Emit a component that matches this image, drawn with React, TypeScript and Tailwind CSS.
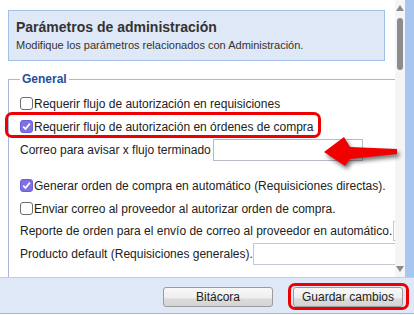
import React from "react";

function Check({ checked }: { checked?: boolean }) {
  if (checked) {
    return (
      <span className="flex h-[13px] w-[13px] shrink-0 items-center justify-center rounded-[3px] border border-[#6b60d6] bg-[#7d71e4]">
        <svg width="9" height="9" viewBox="0 0 9 9">
          <path d="M1.2 4.6 L3.5 7 L7.9 1.6" fill="none" stroke="#ffffff" strokeWidth="1.8" />
        </svg>
      </span>
    );
  }
  return <span className="h-[13px] w-[13px] shrink-0 rounded-[3px] border border-[#6e6e6e] bg-white" />;
}

function CheckRow({ label, checked }: { label: string; checked?: boolean }) {
  return (
    <div className="flex h-[23px] items-center whitespace-nowrap">
      <Check checked={checked} />
      <span className="pl-[1px]">{label}</span>
    </div>
  );
}

function Button({ label }: { label: string }) {
  return (
    <button className="h-[20px] w-[110px] rounded-[3px] border border-[#9c9c9c] bg-[linear-gradient(to_bottom,#f8f8f8_0%,#eeeeee_55%,#dcdcdc_60%,#d4d4d4_100%)] text-[12px] leading-none text-[#222]">
      {label}
    </button>
  );
}

export default function App() {
  return (
    <div className="relative flex h-[315px] w-[414px] flex-col overflow-hidden bg-white font-['Liberation_Sans',Arial,sans-serif] text-[12px] text-[#222]">
      <div className="flex h-[277px]">
        <main className="w-[395px] overflow-hidden pl-[8px] pt-[10px]">
          <div className="w-[377px] border border-[#a3c0e8] bg-[#dfe8f6] pb-[8px] pl-[7px] pt-[8px]">
            <h1 className="text-[14px] font-bold leading-[16px] text-[#333]">Parámetros de administración</h1>
            <p className="mt-[3px] text-[11px] leading-[14px] text-[#333]">Modifique los parámetros relacionados con Administración.</p>
          </div>

          <fieldset className="mt-[11px] w-[400px] border-l border-t border-[#a6b9d6] pb-[40px] pl-[11px]">
            <legend className="px-[2px] text-[12px] font-bold leading-[14px] text-[#1f4f9e]">General</legend>
            <div className="pt-[6px]">
              <CheckRow label="Requerir flujo de autorización en requisiciones" />
              <CheckRow label="Requerir flujo de autorización en órdenes de compra" checked />
              <div className="flex h-[24px] items-center gap-[2px] whitespace-nowrap">
                <span>Correo para avisar x flujo terminado</span>
                <input className="h-[22px] w-[150px] shrink-0 border border-[#b7bbc8] bg-white" />
              </div>
              <div className="mt-[12px]">
                <CheckRow label="Generar orden de compra en automático (Requisiciones directas)." checked />
                <CheckRow label="Enviar correo al proveedor al autorizar orden de compra." />
              </div>
              <div className="flex h-[22px] items-center gap-[1px] whitespace-nowrap">
                <span>Reporte de orden para el envío de correo al proveedor en automático.</span>
                <input className="h-[20px] w-[150px] shrink-0 border border-[#c4c7d0] bg-white" />
              </div>
              <div className="flex h-[23px] items-center whitespace-nowrap">
                <span>Producto default (Requisiciones generales).</span>
                <input className="h-[22px] w-[150px] shrink-0 border border-[#c4c7d0] bg-white" />
              </div>
            </div>
          </fieldset>
        </main>

        <div className="flex w-[10px] flex-col items-center bg-[#f5f5f5]">
          <svg width="8" height="6" viewBox="0 0 8 6" className="mt-[5px]">
            <path d="M4 0 L8 6 L0 6 Z" fill="#8a8a8a" />
          </svg>
          <div className="mt-[7px] h-[52px] w-[6px] rounded-full bg-[#8c8c8c]" />
          <div className="flex-1" />
          <svg width="8" height="6" viewBox="0 0 8 6" className="mb-[5px]">
            <path d="M0 0 L8 0 L4 6 Z" fill="#8a8a8a" />
          </svg>
        </div>
        <div className="flex-1 bg-[#a9c6ef]" />
      </div>

      <div className="flex h-[37px] items-start justify-end gap-[20px] border-b border-t border-b-[#9ab8e2] border-t-[#bccfe9] bg-[#dfe8f6] pr-[11px] pt-[9px]">
        <Button label="Bitácora" />
        <div className="relative">
          <Button label="Guardar cambios" />
          <span className="absolute -bottom-[3px] -left-[5px] -right-[6px] -top-[4px] rounded-[7px] border-[3px] border-[#ee0000]" />
        </div>
      </div>

      {/* annotations */}
      <span className="absolute left-[5px] top-[112px] h-[26px] w-[316px] rounded-[7px] border-[3px] border-[#ee0000]" />
      <svg width="80" height="40" viewBox="0 0 80 40" className="absolute left-[320px] top-[132px] drop-shadow-[2px_3px_2px_rgba(0,0,0,0.55)]">
        <polygon points="4,20 24,5 30,15 77,17 77,22 30,27 25,34" fill="#f00000" />
      </svg>
    </div>
  );
}
